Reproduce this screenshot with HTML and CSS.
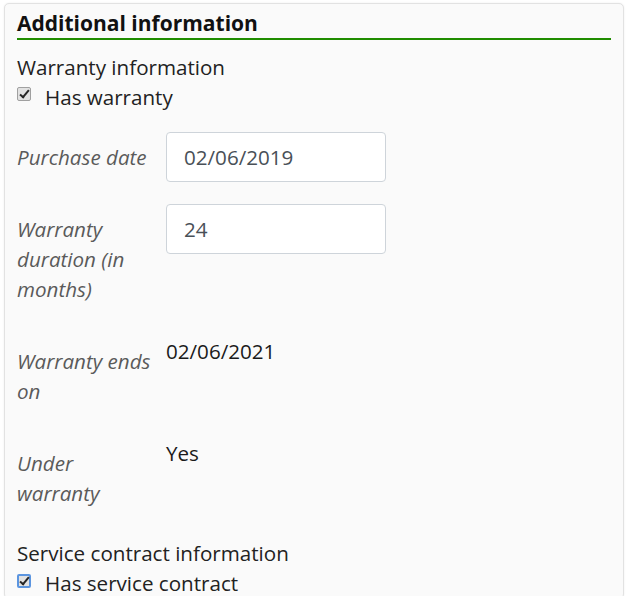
FILE: index.html
```
<!DOCTYPE html>
<html>
	<head>
		<meta charset="UTF-8">
		<title>Additional information</title>
		<link rel="stylesheet" href="styles.css">
	</head>
	<body>
		<div class="panel">
			<h2 class="panel-title">Additional information</h2>

			<div class="group">
				<div class="group-title">Warranty information</div>
				<label class="check"><span class="box"></span>Has warranty</label>
				<div class="fields">
					<div class="field">
						<div class="field-label">Purchase date</div>
						<div class="field-value"><input class="input" type="text" value="02/06/2019"></div>
					</div>
					<div class="field">
						<div class="field-label">Warranty duration (in months)</div>
						<div class="field-value"><input class="input" type="text" value="24"></div>
					</div>
					<div class="field">
						<div class="field-label">Warranty ends on</div>
						<div class="field-value text">02/06/2021</div>
					</div>
					<div class="field">
						<div class="field-label">Under warranty</div>
						<div class="field-value text">Yes</div>
					</div>
				</div>
			</div>

			<div class="group">
				<div class="group-title">Service contract information</div>
				<label class="check focus"><span class="box"></span>Has service contract</label>
			</div>
		</div>
	</body>
</html>
```

FILE: styles.css
```
html,body{
	margin: 0;
	padding: 0;
	background: #fff;
}
body{
	font-family: "Open Sans", "Noto Sans", sans-serif;
	font-size: 20.6px;
	line-height: 30px;
	color: #222;
}
.panel{
	margin: 3px 3px 0 4px;
	padding: 4px 12px 0 12px;
	background: #fafafa;
	border: 1px solid #e2e2e2;
	border-radius: 5px;
	box-shadow: 0 0 2px rgba(0,0,0,0.08);
}
.panel-title{
	margin: 0;
	height: 30px;
	font-size: 21px;
	line-height: 30px;
	font-weight: bold;
	color: #111;
	border-bottom: 2px solid #1f8c00;
}
.group{
	padding-top: 12px;
}
.group + .group{
	padding-top: 20px;
}
.group-title{
	line-height: 30px;
}
.check{
	display: flex;
	align-items: center;
	height: 30px;
}
.check .box{
	position: relative;
	box-sizing: border-box;
	width: 14px;
	height: 14px;
	margin: -6px 14px 0 0;
	border: 1px solid #a0a0a0;
	border-radius: 2px;
	background: #e2e2e2;
}
.check .box:after{
	content: "";
	position: absolute;
	left: 4px;
	top: 0;
	width: 3px;
	height: 8px;
	border: solid #262626;
	border-width: 0 2.5px 2.5px 0;
	transform: rotate(40deg);
}
.check.focus .box{
	border: 2px solid #5b95e0;
	margin-top: -4px;
}
.check.focus .box:after{
	left: 3px;
	top: -1px;
}
.fields{
	padding-top: 20px;
}
.field{
	display: grid;
	grid-template-columns: 138px 1fr;
	column-gap: 11px;
	margin-bottom: 22px;
}
.field:last-child{
	margin-bottom: 0;
}
.field-label{
	padding: 10px 0;
	font-style: italic;
	color: #5a5a5a;
}
.field-value.text{
	color: #1a1a1a;
}
.input{
	display: block;
	box-sizing: border-box;
	width: 220px;
	height: 50px;
	padding: 0 17px;
	font-family: inherit;
	font-size: 20.6px;
	color: #495057;
	background: #fff;
	border: 1px solid #ced4da;
	border-radius: 4px;
	outline: none;
}
```
